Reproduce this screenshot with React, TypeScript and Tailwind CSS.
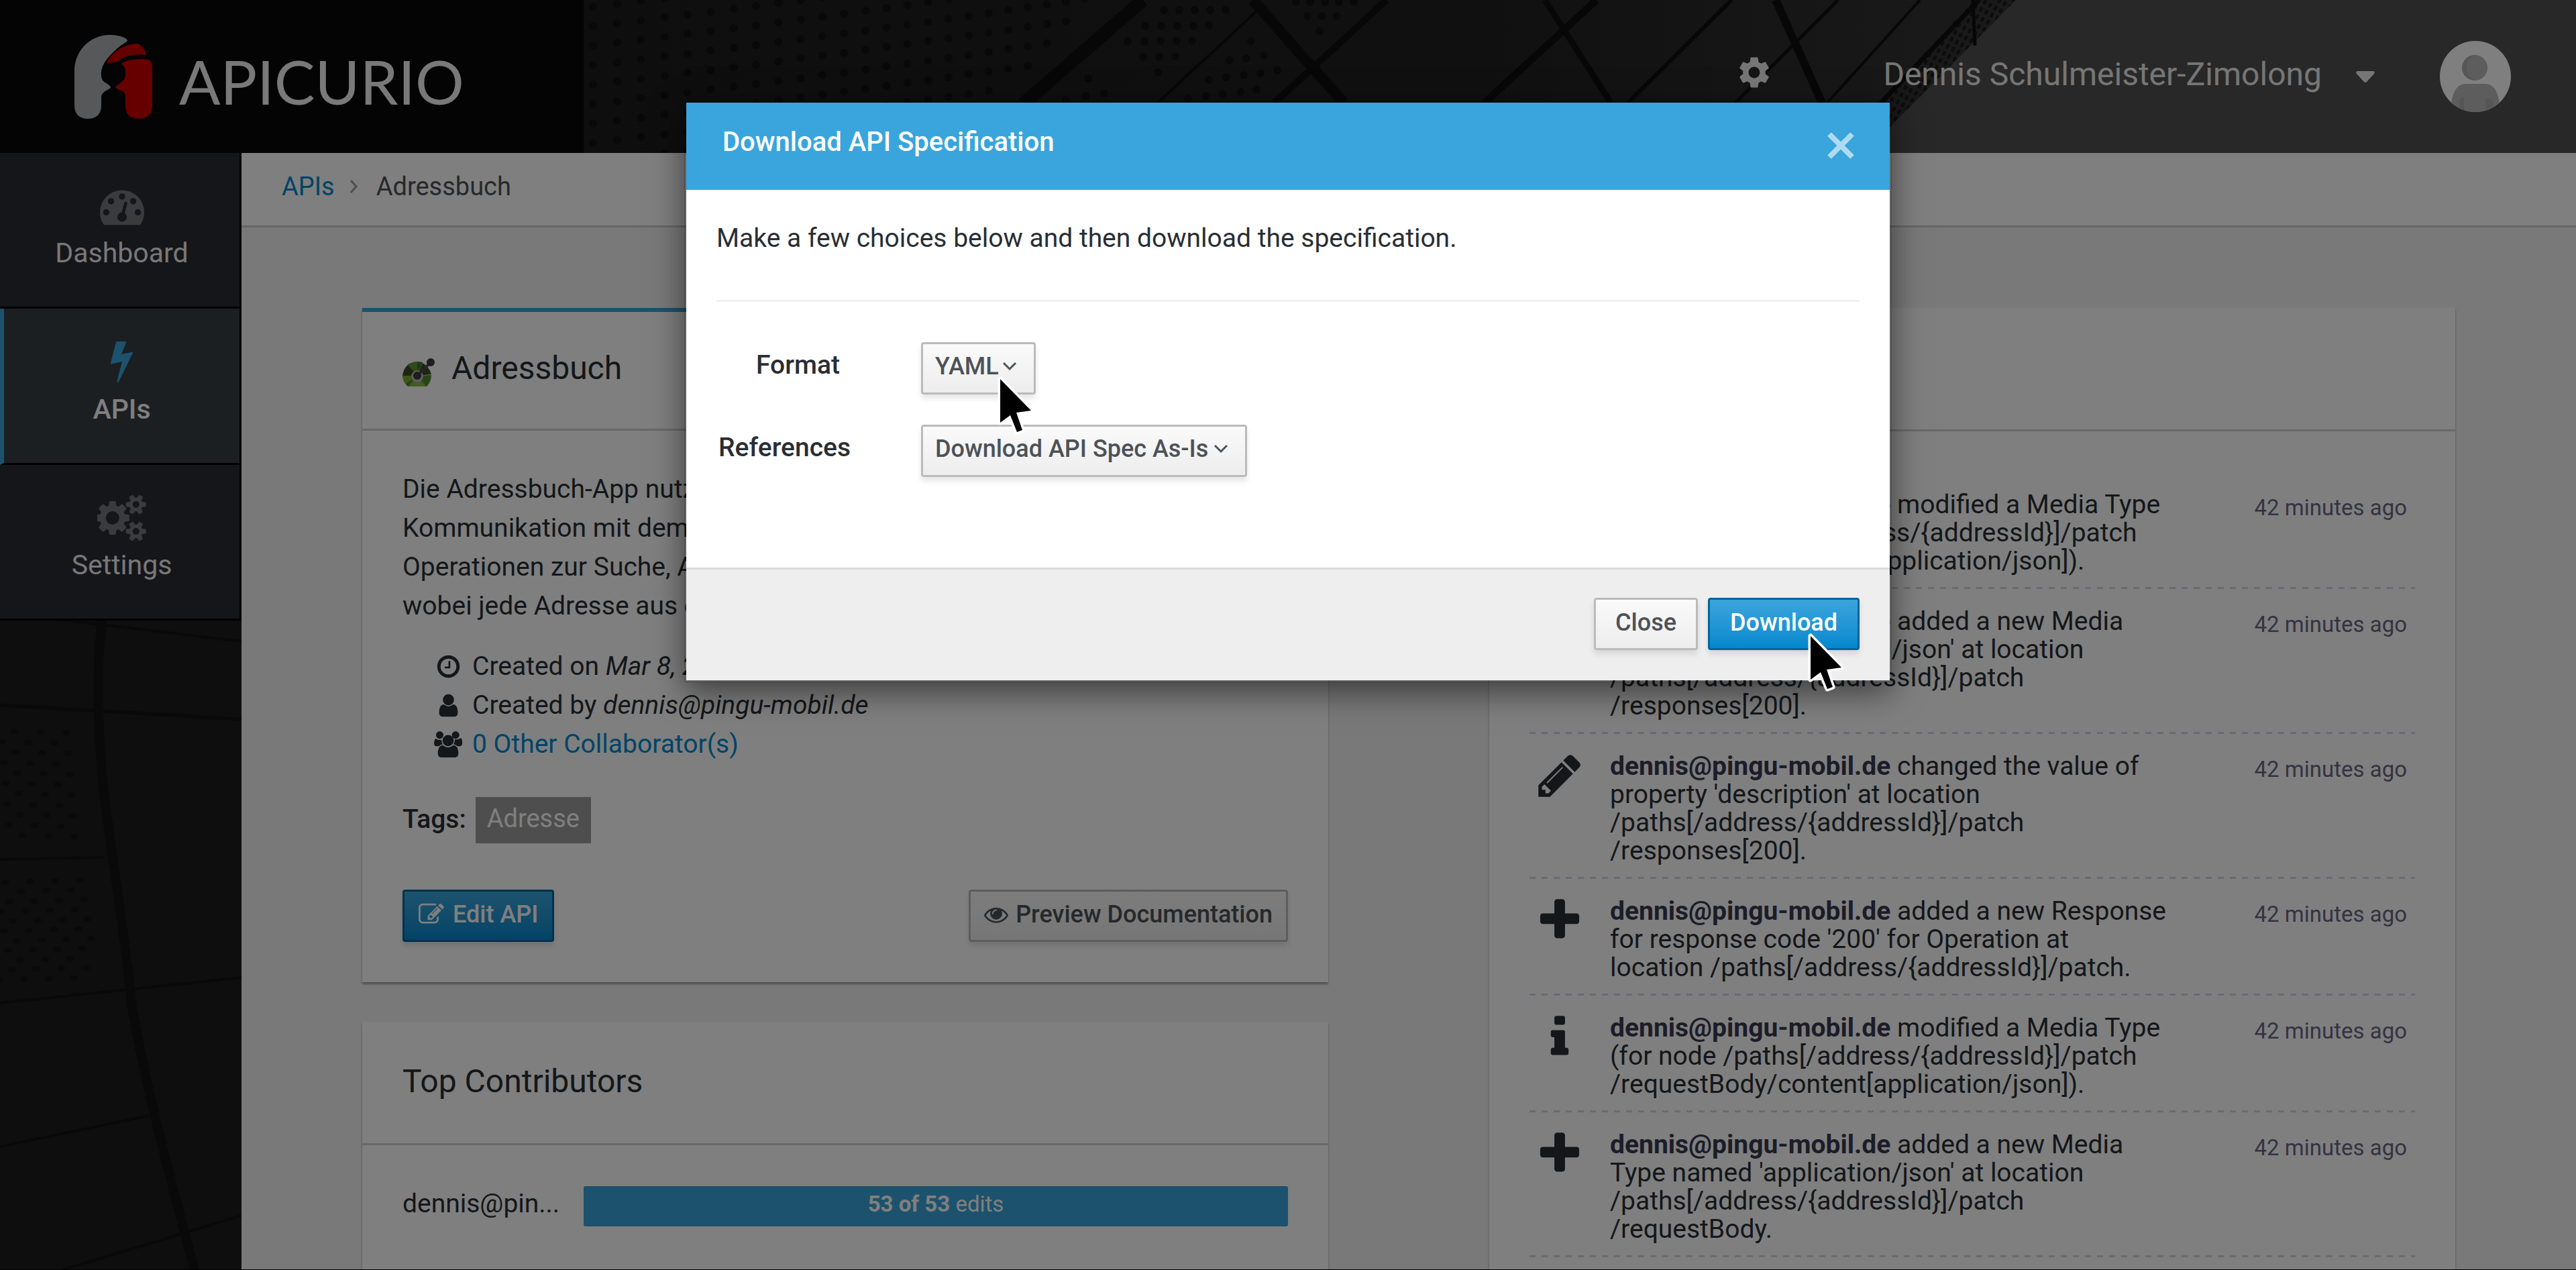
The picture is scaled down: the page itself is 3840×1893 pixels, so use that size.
import React from "react";
import { MdSettings } from "react-icons/md";

/* ---------- icons ---------- */

const GLYPHS = {
  plus: "M1600 736v192q0 40-28 68t-68 28h-416v416q0 40-28 68t-68 28h-192q-40 0-68-28t-28-68v-416h-416q-40 0-68-28t-28-68v-192q0-40 28-68t68-28h416v-416q0-40 28-68t68-28h192q40 0 68 28t28 68v416h416q40 0 68 28t28 68z",
  pencil:
    "M491 1536l91-91-235-235-91 91v107h128v128h107zm523-928q0-22-22-22-10 0-17 7l-542 542q-7 7-7 17 0 22 22 22 10 0 17-7l542-542q7-7 7-17zm-54-192l416 416-832 832h-416v-416zm683 96q0 53-37 90l-166 166-416-416 166-165q36-38 90-38 53 0 91 38l235 234q37 39 37 91z",
  info: "M1216 1344v128q0 26-19 45t-45 19h-512q-26 0-45-19t-19-45v-128q0-26 19-45t45-19h64v-384h-64q-26 0-45-19t-19-45v-128q0-26 19-45t45-19h384q26 0 45 19t19 45v576h64q26 0 45 19t19 45zm-128-1152v192q0 26-19 45t-45 19h-256q-26 0-45-19t-19-45v-192q0-26 19-45t45-19h256q26 0 45 19t19 45z",
  eye: "M1664 960q-152-236-381-353 61 104 61 225 0 185-131.5 316.5t-316.5 131.5-316.5-131.5-131.5-316.5q0-121 61-225-229 117-381 353 133 205 333.5 326.5t434.5 121.5 434.5-121.5 333.5-326.5zm-720-384q0-20-14-34t-34-14q-125 0-214.5 89.5t-89.5 214.5q0 20 14 34t34 14 34-14 14-34q0-86 61-147t147-61q20 0 34-14t14-34zm848 384q0 34-20 69-140 230-376.5 368.5t-499.5 138.5-499.5-139-376.5-368q-20-35-20-69t20-69q140-229 376.5-368t499.5-139 499.5 139 376.5 368q20 35 20 69z",
  edit: "M888 1184l116-116-152-152-116 116v56h96v96h56zm440-720q-16-16-33 1l-350 350q-17 17-1 33t33-1l350-350q17-17 1-33zm80 594v190q0 119-84.5 203.5t-203.5 84.5h-832q-119 0-203.5-84.5t-84.5-203.5v-832q0-119 84.5-203.5t203.5-84.5h832q63 0 117 25 15 7 18 23 3 17-9 29l-49 49q-14 14-32 8-23-6-45-6h-832q-66 0-113 47t-47 113v832q0 66 47 113t113 47h832q66 0 113-47t47-113v-126q0-13 9-22l64-64q15-15 35-7t20 29zm-96-738l288 288-672 672h-288v-288zm444 132l-92 92-288-288 92-92q28-28 68-28t68 28l152 152q28 28 28 68t-28 68z",
  clock:
    "M1024 544v448q0 14-9 23t-23 9h-320q-14 0-23-9t-9-23v-64q0-14 9-23t23-9h224v-352q0-14 9-23t23-9h64q14 0 23 9t9 23zm416 352q0-148-73-273t-198-198-273-73-273 73-198 198-73 273 73 273 198 198 273 73 273-73 198-198 73-273zm224 0q0 209-103 385.5t-279.5 279.5-385.5 103-385.5-103-279.5-279.5-103-385.5 103-385.5 279.5-279.5 385.5-103 385.5 103 279.5 279.5 103 385.5z",
  user: "M1536 1399q0 109-62.5 187t-150.5 78h-854q-88 0-150.5-78t-62.5-187q0-85 8.5-160.5t31.5-152 58.5-131 94-89 134.5-34.5q131 128 313 128t313-128q76 0 134.5 34.5t94 89 58.5 131 31.5 152 8.5 160.5zm-256-887q0 159-112.5 271.5t-271.5 112.5-271.5-112.5-112.5-271.5 112.5-271.5 271.5-112.5 271.5 112.5 112.5 271.5z",
  users:
    "M529 896q-162 5-265 128h-134q-82 0-138-40.5t-56-118.5q0-353 124-353 6 0 43.5 21t97.5 42.5 119 21.5q67 0 133-23-5 37-5 66 0 159 93 293zm1071 637q0 120-73 189.5t-194 69.5h-874q-121 0-194-69.5t-73-189.5q0-53 3.5-103.5t14-109 26.5-108.5 43-97.5 62-81 85.5-53.5 111.5-20q10 0 43 21.5t73 48 107 48 135 21.5 135-21.5 107-48 73-48 43-21.5q61 0 111.5 20t85.5 53.5 62 81 43 97.5 26.5 108.5 14 109 3.5 103.5zm-1024-1277q0 106-75 181t-181 75-181-75-75-181 75-181 181-75 181 75 75 181zm704 384q0 159-112.5 271.5t-271.5 112.5-271.5-112.5-112.5-271.5 112.5-271.5 271.5-112.5 271.5 112.5 112.5 271.5zm576 225q0 78-56 118.5t-138 40.5h-134q-103-123-265-128 93-134 93-293 0-29-5-66 66 23 133 23 59 0 119-21.5t97.5-42.5 43.5-21q124 0 124 353zm-192-609q0 106-75 181t-181 75-181-75-75-181 75-181 181-75 181 75 75 181z",
  gauge:
    "M384 1152q0-53-37.5-90.5t-90.5-37.5-90.5 37.5-37.5 90.5 37.5 90.5 90.5 37.5 90.5-37.5 37.5-90.5zm192-448q0-53-37.5-90.5t-90.5-37.5-90.5 37.5-37.5 90.5 37.5 90.5 90.5 37.5 90.5-37.5 37.5-90.5zm428 481l101-382q6-26-7.5-48.5t-38.5-29.5-48 6.5-30 39.5l-101 382q-60 5-107 43.5t-63 98.5q-20 77 20 146t117 89 146-20 89-117q16-60-6-117t-72-91zm660-33q0-53-37.5-90.5t-90.5-37.5-90.5 37.5-37.5 90.5 37.5 90.5 90.5 37.5 90.5-37.5 37.5-90.5zm-640-640q0-53-37.5-90.5t-90.5-37.5-90.5 37.5-37.5 90.5 37.5 90.5 90.5 37.5 90.5-37.5 37.5-90.5zm448 192q0-53-37.5-90.5t-90.5-37.5-90.5 37.5-37.5 90.5 37.5 90.5 90.5 37.5 90.5-37.5 37.5-90.5zm320 448q0 261-141 483-19 29-54 29h-1402q-35 0-54-29-141-221-141-483 0-182 71-348t191-286 286-191 348-71 348 71 286 191 191 286 71 348z",
  cogs: "M832 896q0-106-75-181t-181-75-181 75-75 181 75 181 181 75 181-75 75-181zm768 512q0-52-38-90t-90-38-90 38-38 90q0 53 37.5 90.5t90.5 37.5 90.5-37.5 37.5-90.5zm0-1024q0-52-38-90t-90-38-90 38-38 90q0 53 37.5 90.5t90.5 37.5 90.5-37.5 37.5-90.5zm-384 421v185q0 10-7 19.5t-16 10.5l-155 24q-11 35-32 76 34 48 90 115 7 11 7 20 0 12-7 19-23 30-82.5 89.5t-78.5 59.5q-11 0-21-7l-115-90q-37 19-77 31-11 108-23 155-7 24-30 24h-186q-11 0-20-7.5t-10-17.5l-23-153q-34-10-75-31l-118 89q-7 7-20 7-11 0-21-8-144-133-144-160 0-9 7-19 10-14 41-53t47-61q-23-44-35-82l-152-24q-10-1-17-9.5t-7-19.5v-185q0-10 7-19.5t16-10.5l155-24q11-35 32-76-34-48-90-115-7-11-7-20 0-12 7-20 22-30 82-89t79-59q11 0 21 7l115 90q34-18 77-32 11-108 23-154 7-24 30-24h186q11 0 20 7.5t10 17.5l23 153q34 10 75 31l118-89q8-7 20-7 11 0 21 8 144 133 144 160 0 8-7 19-12 16-42 54t-45 60q23 48 34 82l152 23q10 2 17 10.5t7 19.5zm640 533v140q0 16-149 31-12 27-30 52 51 113 51 138 0 4-4 7-122 71-124 71-8 0-46-47t-52-68q-20 2-30 2t-30-2q-14 21-52 68t-46 47q-2 0-124-71-4-3-4-7 0-25 51-138-18-25-30-52-149-15-149-31v-140q0-16 149-31 13-29 30-52-51-113-51-138 0-4 4-7 4-2 35-20t59-34 30-16q8 0 46 46.5t52 67.5q20-2 30-2t30 2q51-71 92-112l6-2q4 0 124 70 4 3 4 7 0 25-51 138 17 23 30 52 149 15 149 31zm0-1024v140q0 16-149 31-12 27-30 52 51 113 51 138 0 4-4 7-122 71-124 71-8 0-46-47t-52-68q-20 2-30 2t-30-2q-14 21-52 68t-46 47q-2 0-124-71-4-3-4-7 0-25 51-138-18-25-30-52-149-15-149-31v-140q0-16 149-31 13-29 30-52-51-113-51-138 0-4 4-7 4-2 35-20t59-34 30-16q8 0 46 46.5t52 67.5q20-2 30-2t30 2q51-71 92-112l6-2q4 0 124 70 4 3 4 7 0 25-51 138 17 23 30 52 149 15 149 31z",
};

type GlyphName = keyof typeof GLYPHS;

function Glyph({
  name,
  className,
  viewBox = "0 0 1792 1792",
}: {
  name: GlyphName;
  className: string;
  viewBox?: string;
}) {
  return (
    <svg viewBox={viewBox} className={className} fill="currentColor" aria-hidden="true">
      <path d={GLYPHS[name]} />
    </svg>
  );
}

function Bolt({ className }: { className: string }) {
  return (
    <svg viewBox="0 0 33 61" className={className} fill="currentColor" aria-hidden="true">
      <path d="M9 0h13q1.500 0 1 1.500L16 19l15-3q3-.5 1.500 2L12 60q-2.500 2-2.500-1L17 30 1 33.500q-1.500 0-1-2L8 1q0-1 1-1z" />
    </svg>
  );
}

function LogoMark() {
  return (
    <svg viewBox="0 0 116 125" className="h-[125px] w-[116px]" aria-hidden="true">
      <path
        fill="#aeb0b3"
        d="M0 50C2 22 24 0 53 0c13 0 24 4 26 8 0 3-8 5-16 13C47 35 38 48 40 62c1 10 12 10 14 16-2 5-14 5-14 16v11c0 14-8 20-20 20S0 119 0 105z"
      />
      <path fill="#cc0000" d="M48 43c3-12 22-30 47-30 6 4 11 10 12 17-17-2-29 0-38 6-5 4-8 5-13 5-4 0-7 1-8 2z" />
      <path
        fill="#cc0000"
        d="M70 43c6-6 18-7 35-7 7 0 11 4 11 12v57c0 14-7 20-20 20s-20-6-20-20V92c0-11-11-8-15-14 4-6 15-8 15-19 0-8 0-11-6-16z"
      />
    </svg>
  );
}

function OpenApiMark() {
  return (
    <svg viewBox="0 0 48 44" className="h-[44px] w-[48px]" aria-hidden="true">
      <path fill="#6b9f2b" d="M22 27L8 43h29z" />
      <path fill="#88b840" d="M22 27L10 43h24z" />
      <path fill="#567d22" d="M22 27L0 27q1 10 8 16z" />
      <path fill="#7fae33" d="M22 27L0 27q1 9 5 12z" />
      <path fill="#3e4a24" d="M22 27L0 27q1-11 10-18z" />
      <path fill="#5c9635" d="M22 27L8 11q6-5 14-5z" />
      <path fill="#46702a" d="M22 27V6q4 0 8 1z" />
      <path fill="#3e4a24" d="M22 27L30 8q10 6 13 17z" />
      <path fill="#4f8a2c" d="M22 27l21-1q0 10-7 17z" />
      <circle cx="22" cy="28" r="9" fill="#b9b9b9" />
      <path d="M22 27L41 8" stroke="#4a4a4a" strokeWidth="4" />
      <circle cx="22" cy="27" r="6" fill="#3c3c3c" />
      <circle cx="42" cy="7" r="6" fill="#3c3c3c" />
    </svg>
  );
}

function Avatar() {
  return (
    <svg viewBox="0 0 107 107" className="size-[107px]" role="img" aria-label="User avatar">
      <defs>
        <clipPath id="avatar-clip">
          <circle cx="53" cy="53" r="53" />
        </clipPath>
      </defs>
      <g clipPath="url(#avatar-clip)">
        <rect width="107" height="107" fill="#fff" />
        <path fill="#bbb" d="M17 95c2-20 9-31 22-31h28c13 0 20 11 22 31l-10 14H28z" />
        <path fill="#adadad" d="M29 90q1-7 7-7v24h-7zM67 85q12 0 13 8v10l-10 4z" />
        <ellipse cx="52" cy="40" rx="19" ry="19" fill="#adadad" />
        <ellipse cx="55" cy="40" rx="15" ry="18" fill="#bbb" />
      </g>
    </svg>
  );
}

function Pointer({ className }: { className: string }) {
  return (
    <svg viewBox="0 0 60 94" className={className} aria-hidden="true">
      <path
        d="M5 6v65l15-11 10 25 8-3-9-26 22-3z"
        fill="#000"
        stroke="#fff"
        strokeWidth="7"
        strokeLinejoin="round"
        paintOrder="stroke"
      />
    </svg>
  );
}

/* ---------- backdrop artwork ---------- */

type Dot = [number, number];

const facadeDots: Dot[] = [];
for (let col = 0; col < 26; col++) {
  const x = 884 + col * 36 - col * col * 0.18;
  for (let row = -1; row < 14; row++) {
    const y = 10 + row * 29 - col * 4.300;
    if (y > -6 && y < 234 && x < 1635 - y * 1.050) facadeDots.push([x, y]);
  }
}

const strayDots: Dot[] = [
  [1735, 15], [1758, 15], [1781, 15], [1804, 15], [1827, 15],
  [1707, 39], [1731, 39], [1755, 39], [1779, 39], [1802, 38],
  [1681, 62], [1706, 62], [1730, 61], [1754, 61], [1777, 61],
  [1704, 85], [1728, 85], [1752, 84], [1726, 108], [1865, 61],
  [1932, 3], [1953, 3], [1975, 3], [1996, 3], [2018, 3],
  [1949, 24], [1971, 24], [1992, 24], [1967, 46],
  [1833, 90], [1858, 87], [1884, 83],
  [1802, 119], [1828, 115], [1854, 112], [1879, 109], [1904, 105],
  [1771, 147], [1797, 143], [1823, 140], [1849, 137], [1873, 134],
  [1622, 117], [1646, 139], [1618, 143], [1589, 149],
];

function HeaderArt() {
  return (
    <svg
      viewBox="0 0 3840 228"
      preserveAspectRatio="xMinYMin slice"
      className="absolute inset-0 size-full"
      aria-hidden="true"
    >
      <defs>
        <linearGradient id="facade" x1="870" x2="2950" y1="0" y2="0" gradientUnits="userSpaceOnUse">
          <stop offset="0" stopColor="#1d1d1d" />
          <stop offset="0.65" stopColor="#212121" />
          <stop offset="1" stopColor="#343434" />
        </linearGradient>
        <pattern id="mesh" width="9" height="12" patternUnits="userSpaceOnUse" patternTransform="rotate(28)">
          <ellipse cx="4" cy="6" rx="2.500" ry="4" fill="#181818" />
        </pattern>
      </defs>
      <rect width="3840" height="228" fill="url(#facade)" />
      <path d="M2943 0H3005L2779 228H2728z" fill="url(#mesh)" />
      <path d="M3005 0H3840V228H2779z" fill="#505050" />
      <g fill="#121212">
        {[...facadeDots, ...strayDots].map(([x, y]) => (
          <circle key={`${x}-${y}`} cx={x} cy={y} r="6" />
        ))}
      </g>
      <g stroke="#0f0f0f" fill="none">
        <path strokeWidth="20" d="M1704 0L1525 155" />
        <path strokeWidth="16" d="M1867 0L2003 153" />
        <path strokeWidth="10" d="M2067 0L1900 153" />
        <path strokeWidth="4" d="M1873 17L1726 153" />
        <path strokeWidth="11" d="M2380 0L2213 153" />
        <path strokeWidth="9" d="M2303 0L2401 153" />
        <path strokeWidth="6" d="M2581 0L2427 153" />
        <path strokeWidth="12" d="M2647 0L2716 153" />
        <path strokeWidth="5" d="M2740 0L2587 153" />
        <path strokeWidth="4" d="M2862 0L2724 153" />
        <path strokeWidth="7" d="M2950 0L2804 153" />
        <path strokeWidth="5" d="M2941 0L2944 68" />
      </g>
      <rect width="870" height="228" fill="#090909" />
    </svg>
  );
}

const panelDots: Dot[] = [];
for (let row = 0; row < 11; row++) {
  for (let col = 0; col < 4; col++) {
    const x = (row % 2 ? 2 : 21) + col * 39 + row * 1.200;
    if (x < 118) panelDots.push([x, 165 + row * 15.500 + col]);
  }
}
for (let row = 0; row < 11; row++) {
  for (let col = -1; col < 5; col++) {
    const x = (row % 2 ? -8 : 8) + col * 37 + row * 2.800;
    if (x > -6 && x < 125 + row * 2) panelDots.push([x, 390 + row * 14.500 - col]);
  }
}

function SidebarArt() {
  return (
    <svg
      viewBox="0 0 360 968"
      preserveAspectRatio="xMinYMin slice"
      className="min-h-0 w-full flex-1"
      aria-hidden="true"
    >
      <rect width="360" height="968" fill="#1c1c1c" />
      <g fill="#141414">
        {panelDots.map(([x, y]) => (
          <ellipse key={`${x}-${y}`} cx={x} cy={y} rx="6" ry="4" />
        ))}
      </g>
      <g stroke="#121212" fill="none" strokeWidth="4">
        <path d="M67 -4L360 31" />
        <path strokeWidth="5" d="M0 126L360 147" />
        <path d="M0 356L155 353" />
        <path d="M0 570L360 532" />
        <path d="M0 784L222 738" />
        <path d="M93 968L360 887" />
        <path strokeWidth="14" d="M152 0C144 60 146 150 152 230C162 330 178 400 197 577C215 680 240 780 290 968" />
      </g>
    </svg>
  );
}

/* ---------- shared pieces ---------- */

const defaultButton =
  "border-3 border-[#bbbbbb] rounded-[4px] bg-linear-to-b from-[#fafafa] to-[#ededed] text-[#4d5258] shadow-[0_6px_9px_rgba(3,3,3,0.1)]";
const primaryButton =
  "border-3 border-[#00659c] rounded-[4px] bg-linear-to-b from-[#39a5dc] to-[#0088ce] text-white shadow-[0_6px_9px_rgba(3,3,3,0.1)]";
const buttonSize = "flex h-[78px] items-center pb-[5px] text-[36px] leading-[48px] font-medium whitespace-nowrap";

function Card({ title, icon, accent, children }: {
  title: string;
  icon?: React.ReactNode;
  accent?: boolean;
  children: React.ReactNode;
}) {
  return (
    <section
      className={
        accent
          ? "border-t-[6px] border-[#39a5dc] bg-white shadow-[0_3px_3px_rgba(3,3,3,0.35)]"
          : "bg-white shadow-[0_3px_3px_rgba(3,3,3,0.35)]"
      }
    >
      <h2
        className={
          accent
            ? "flex items-end gap-[25px] border-b-3 border-[#d1d1d1] px-[60px] pt-[56px] pb-[62px] text-[48px] leading-[56px]"
            : "border-b-3 border-[#d1d1d1] px-[60px] pt-[61px] pb-[64px] text-[48px] leading-[56px]"
        }
      >
        {icon}
        {title}
      </h2>
      {children}
    </section>
  );
}

/* ---------- header and navigation ---------- */

function Header() {
  return (
    <header className="relative h-[228px] shrink-0">
      <HeaderArt />
      <div className="relative flex h-full items-center">
        <a href="#home" className="flex items-center gap-[40px] pl-[111px]">
          <LogoMark />
          <span className="pt-[14px] font-[Lato] text-[91px] leading-[100px] font-normal text-[#f2f2f2]">APICURIO</span>
        </a>
        <div className="ml-auto flex items-center pr-[96px] text-[#ececec]">
          <button type="button" aria-label="Settings" className="pb-[12px]">
            <MdSettings className="size-[56px]" />
          </button>
          <button type="button" className="ml-[164px] flex items-center gap-[51px] text-[48px] leading-[60px]">
            <span className="pb-[6px]">Dennis Schulmeister-Zimolong</span>
            <svg viewBox="0 0 28 17" className="w-[28px]" fill="currentColor" aria-hidden="true">
              <path d="M2 0h24q3 1 1 4L16 16q-2 2-4 0L1 4q-2-3 1-4z" />
            </svg>
          </button>
          <div className="ml-[97px]">
            <Avatar />
          </div>
        </div>
      </div>
    </header>
  );
}

function NavItem({ label, active, children }: { label: string; active?: boolean; children: React.ReactNode }) {
  return (
    <a
      href={`#${label.toLowerCase()}`}
      className={
        active
          ? "flex h-[233px] shrink-0 flex-col items-center gap-[15px] border-r-3 border-b-3 border-l-6 border-black border-l-[#39a5dc] bg-[#393f44] pt-[48px] text-[41px] leading-[48px] font-medium text-white"
          : "flex h-[232px] shrink-0 flex-col items-center gap-[15px] border-r-3 border-b-3 border-black bg-[#2a2c34] pt-[47px] pl-[6px] text-[41px] leading-[48px] text-[#f0f0f0]"
      }
    >
      <span className="flex h-[63px] items-center justify-center">{children}</span>
      {label}
    </a>
  );
}

function Sidebar() {
  return (
    <nav className="flex w-[360px] shrink-0 flex-col bg-[#1c1c1c]" aria-label="Main">
      <NavItem label="Dashboard">
        <Glyph name="gauge" className="size-[66px] text-[#72767b]" />
      </NavItem>
      <NavItem label="APIs" active>
        <Bolt className="h-[61px] w-[33px] text-[#39a5dc]" />
      </NavItem>
      <NavItem label="Settings">
        <Glyph name="cogs" viewBox="0 0 1856 1792" className="h-[70px] w-[73px] text-[#72767b]" />
      </NavItem>
      <SidebarArt />
    </nav>
  );
}

/* ---------- page content ---------- */

function ApiCard() {
  return (
    <Card title="Adressbuch" icon={<OpenApiMark />} accent>
      <div className="px-[60px] pt-[58px] pb-[60px] text-[39px] leading-[58px]">
        <p>
          Die Adressbuch-App nutzt diese API zur
          <br />
          Kommunikation mit dem Backend. Sie bietet
          <br />
          Operationen zur Suche, Anlage und Pflege,
          <br />
          wobei jede Adresse aus einem Datensatz besteht.
        </p>
        <ul className="mt-[32px] pl-[44px]">
          <li className="flex items-center gap-[12px]">
            <span className="flex w-[48px] justify-center">
              <Glyph name="clock" className="size-[39px]" />
            </span>
            <span>
              Created on <em>Mar 8, 2021</em>
            </span>
          </li>
          <li className="flex items-center gap-[12px]">
            <span className="flex w-[48px] justify-center">
              <Glyph name="user" className="size-[39px]" />
            </span>
            <span>
              Created by <em>dennis@pingu-mobil.de</em>
            </span>
          </li>
          <li className="flex items-center gap-[12px]">
            <span className="flex w-[48px] justify-center">
              <Glyph name="users" viewBox="-64 0 1920 1792" className="h-[39px] w-[42px]" />
            </span>
            <a href="#collaborators" className="text-[#0088ce]">
              0 Other Collaborator(s)
            </a>
          </li>
        </ul>
        <div className="mt-[50px] flex items-center gap-[14px]">
          <span className="pb-[4px] font-medium">Tags:</span>
          <span className="flex h-[69px] items-center bg-[#9c9c9c] px-[17px] pb-[6px] text-[38px] text-white">
            Adresse
          </span>
        </div>
        <div className="mt-[69px] flex justify-between">
          <button type="button" className={`${primaryButton} ${buttonSize} gap-[13px] px-[21px]`}>
            <Glyph name="edit" className="size-[38px]" />
            Edit API
          </button>
          <button type="button" className={`${defaultButton} ${buttonSize} gap-[11px] px-[20px]`}>
            <Glyph name="eye" className="size-[36px]" />
            Preview Documentation
          </button>
        </div>
      </div>
    </Card>
  );
}

function ContributorsCard() {
  return (
    <Card title="Top Contributors">
      <div className="flex items-center px-[60px] pt-[60px] pb-[90px]">
        <span className="w-[270px] shrink-0 pb-[8px] text-[39px] leading-[54px]">dennis@pin...</span>
        <div
          className="flex h-[60px] flex-1 items-center justify-center rounded-[3px] bg-[#39a5dc] pb-[6px] text-[33px] leading-[48px] text-white"
          role="progressbar"
          aria-valuenow={53}
          aria-valuemax={53}
          aria-label="Edits by dennis@pingu-mobil.de"
        >
          <span>
            <strong className="font-bold">53 of 53</strong> edits
          </span>
        </div>
      </div>
    </Card>
  );
}

const ACTIVITY: { icon: GlyphName; lines: string[] }[] = [
  {
    icon: "info",
    lines: [
      "modified a Media Type",
      "(for node /paths[/address/{addressId}]/patch",
      "/requestBody/content[application/json]).",
    ],
  },
  {
    icon: "plus",
    lines: [
      "added a new Media",
      "Type named 'application/json' at location",
      "/paths[/address/{addressId}]/patch",
      "/responses[200].",
    ],
  },
  {
    icon: "pencil",
    lines: [
      "changed the value of",
      "property 'description' at location",
      "/paths[/address/{addressId}]/patch",
      "/responses[200].",
    ],
  },
  {
    icon: "plus",
    lines: [
      "added a new Response",
      "for response code '200' for Operation at",
      "location /paths[/address/{addressId}]/patch.",
    ],
  },
  {
    icon: "info",
    lines: [
      "modified a Media Type",
      "(for node /paths[/address/{addressId}]/patch",
      "/requestBody/content[application/json]).",
    ],
  },
  {
    icon: "plus",
    lines: [
      "added a new Media",
      "Type named 'application/json' at location",
      "/paths[/address/{addressId}]/patch",
      "/requestBody.",
    ],
  },
];

function ActivityCard() {
  return (
    <Card title="Activity">
      <ul className="px-[60px] pt-[61px] pb-[90px]">
        {ACTIVITY.map((entry, index) => (
          <li key={index}>
            <div className="flex items-start pt-[25px] pr-[12px] pb-[18px]">
              <Glyph name={entry.icon} className="mr-[38px] ml-[8px] size-[74px] shrink-0" />
              <p className="flex-1 pt-[2px] text-[39px] leading-[42px]">
                <strong className="font-bold text-[#393b50]">dennis@pingu-mobil.de</strong>{" "}
                {entry.lines.map((line, i) => (
                  <React.Fragment key={line}>
                    {i > 0 && <br />}
                    {line}
                  </React.Fragment>
                ))}
              </p>
              <time className="pt-[7px] text-[33px] leading-[42px] text-[#6b6784]">42 minutes ago</time>
            </div>
            <div className="h-[3px] bg-[repeating-linear-gradient(90deg,#d6d4e4_0_9px,transparent_9px_18px)]" />
          </li>
        ))}
      </ul>
    </Card>
  );
}

/* ---------- dialog ---------- */

function ChoiceSelect({ id, value, className }: { id: string; value: string; className: string }) {
  return (
    <div className={`relative ${className}`}>
      <select
        id={id}
        defaultValue={value}
        className={`${defaultButton} h-[78px] w-full appearance-none pr-[50px] pb-[6px] pl-[18px] text-[36px] leading-[48px] font-medium`}
      >
        <option>{value}</option>
      </select>
      <svg
        viewBox="0 0 22 14"
        className="pointer-events-none absolute top-[29px] right-[28px] w-[22px]"
        fill="none"
        stroke="#4d5258"
        strokeWidth="3"
        aria-hidden="true"
      >
        <path d="M2 2l9 9 9-9" />
      </svg>
    </div>
  );
}

function DownloadDialog() {
  return (
    <div
      role="dialog"
      aria-modal="true"
      aria-labelledby="dialog-title"
      className="relative w-[1800px] border-3 border-black/20 bg-white bg-clip-padding shadow-[0_15px_45px_rgba(0,0,0,0.5)]"
    >
      <header className="flex h-[130px] items-start justify-between bg-[#39a5dc] pr-[52px] pl-[54px]">
        <h1 id="dialog-title" className="pt-[35px] text-[40px] leading-[48px] font-medium text-white">
          Download API Specification
        </h1>
        <button type="button" aria-label="Close dialog" className="pt-[43px] text-white/60">
          <svg viewBox="0 0 42 42" className="size-[42px]" stroke="currentColor" strokeWidth="8" fill="none" aria-hidden="true">
            <path d="M4 4l34 34M38 4L4 38" />
          </svg>
        </button>
      </header>
      <div className="px-[45px] pt-[43px] pb-[135px] text-[39px] leading-[58px]">
        <p>Make a few choices below and then download the specification.</p>
        <hr className="mt-[63px] mb-[60px] border-0 border-t-3 border-[#f0f0f0]" />
        <form className="grid grid-cols-[200px_1fr] gap-x-[105px] gap-y-[45px]">
          <label htmlFor="format" className="pt-[5px] pr-[16px] text-right font-medium">
            Format
          </label>
          <ChoiceSelect id="format" value="YAML" className="w-[171px]" />
          <label htmlFor="references" className="pt-[5px] text-right font-medium">
            References
          </label>
          <ChoiceSelect id="references" value="Download API Spec As-Is" className="w-[486px]" />
        </form>
      </div>
      <footer className="flex h-[168px] items-start justify-end gap-[15px] border-t-3 border-[#dbdbdb] bg-[#eeeeee] px-[45px] pt-[42px]">
        <button type="button" className={`${defaultButton} ${buttonSize} px-[29px]`}>
          Close
        </button>
        <button type="button" className={`${primaryButton} ${buttonSize} px-[30px]`}>
          Download
        </button>
      </footer>
      <Pointer className="pointer-events-none absolute top-[406px] left-[463px] w-[60px]" />
      <Pointer className="pointer-events-none absolute right-[63px] bottom-[-22px] w-[60px]" />
    </div>
  );
}

export default function App() {
  return (
    <div className="relative flex h-screen flex-col overflow-hidden bg-[#f3f3f3] font-[Roboto,sans-serif] text-[#292e34]">
      <Header />
      <div className="flex min-h-0 flex-1">
        <Sidebar />
        <main className="min-w-0 flex-1 overflow-hidden">
          <nav
            aria-label="Breadcrumb"
            className="flex h-[111px] items-center border-b-3 border-[#cccccc] bg-white pb-[8px] pl-[60px] text-[38px] leading-[48px] text-[#4d5258]"
          >
            <a href="#apis" className="text-[#0088ce]">
              APIs
            </a>
            <svg
              viewBox="0 0 12 20"
              className="mr-[28px] ml-[22px] h-[20px] w-[12px]"
              fill="none"
              stroke="#9c9c9c"
              strokeWidth="3"
              aria-hidden="true"
            >
              <path d="M2 1l8 9-8 9" />
            </svg>
            <span>Adressbuch</span>
          </nav>
          <div className="flex items-start gap-[240px] px-[180px] pt-[120px]">
            <div className="flex flex-1 flex-col gap-[59px]">
              <ApiCard />
              <ContributorsCard />
            </div>
            <div className="flex-1">
              <ActivityCard />
            </div>
          </div>
        </main>
      </div>
      <div className="absolute inset-0 flex items-start justify-center border-b border-black bg-black/50 pt-[150px]">
        <DownloadDialog />
      </div>
    </div>
  );
}
